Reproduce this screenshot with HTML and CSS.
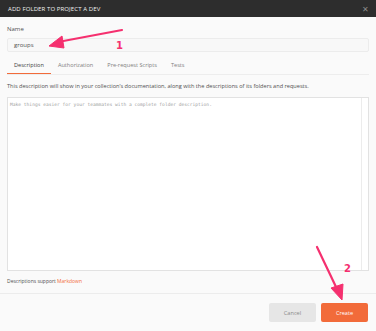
FILE: index.html
```html
<!DOCTYPE html>
<html lang="en">
<head>
    <meta charset="UTF-8">
    <title>Add Folder</title>
    <link rel="stylesheet" href="styles.css">
</head>
<body>

<div class="modal">
    <header class="modal-header">
        <h1>ADD FOLDER TO PROJECT A DEV</h1>
        <span class="close">&#x2715;</span>
    </header>

    <div class="modal-body">
        <label class="field-label">Name</label>
        <div class="name-input">groups</div>

        <nav class="tabs">
            <a class="tab active">Description</a>
            <a class="tab">Authorization</a>
            <a class="tab">Pre-request Scripts</a>
            <a class="tab">Tests</a>
        </nav>

        <p class="help">This description will show in your collection’s documentation, along with the descriptions of its folders and requests.</p>

        <div class="editor">
            <div class="editor-text">Make things easier for your teammates with a complete folder description.</div>
            <div class="editor-scroll"></div>
        </div>

        <p class="note">Descriptions support <a>Markdown</a></p>
    </div>

    <footer class="modal-footer">
        <button class="btn btn-cancel">Cancel</button>
        <button class="btn btn-create">Create</button>
    </footer>
</div>

<!-- annotation arrows drawn over the screenshot -->
<svg class="annotations" width="376" height="331" viewBox="0 0 376 331">
    <g fill="#f5306f" stroke="#f5306f">
        <line x1="122" y1="30" x2="58" y2="42" stroke-width="2.2" stroke-linecap="round"/>
        <polygon points="49,46 62,36 64,48" stroke-width="1" stroke-linejoin="round"/>
        <line x1="317" y1="247" x2="337" y2="289" stroke-width="2.2" stroke-linecap="round"/>
        <polygon points="342,300 331,288 343,284" stroke-width="1" stroke-linejoin="round"/>
    </g>
    <text x="116" y="49" class="num">1</text>
    <text x="344" y="272" class="num">2</text>
</svg>

</body>
</html>
```

FILE: styles.css
```css
body {
    margin: 0;
    font-family: 'Open Sans', sans-serif;
    background-color: #fafafa;
    color: #505050;
    width: 376px;
    height: 331px;
    overflow: hidden;
    position: relative;
}

.modal {
    display: flex;
    flex-direction: column;
    height: 331px;
}

.modal-header {
    background-color: #2d2d2d;
    height: 17px;
    flex: none;
    padding: 0 7px 0 8px;
    display: flex;
    justify-content: space-between;
    align-items: center;
}

.modal-header h1 {
    margin: 0;
    font-size: 6px;
    font-weight: 400;
    color: #f0f0f0;
    letter-spacing: 0.1px;
}

.close {
    color: #8a8a8a;
    font-size: 8px;
}

.modal-body {
    padding: 8px 7px 0 7px;
    display: flex;
    flex-direction: column;
}

.field-label {
    font-size: 6px;
    color: #505050;
    height: 8px;
    line-height: 8px;
}

.name-input {
    margin-top: 5px;
    height: 12px;
    border: 1px solid #ececec;
    border-radius: 2px;
    background-color: #f8f8f8;
    font-size: 6px;
    line-height: 12px;
    padding-left: 6px;
    color: #505050;
}

.tabs {
    display: flex;
    margin-top: 6px;
    height: 16px;
    border-bottom: 1px solid #ededed;
    align-items: stretch;
}

.tab {
    font-size: 5.6px;
    color: #808080;
    padding: 0 7px;
    line-height: 15px;
}

.tab.active {
    color: #404040;
    border-bottom: 1.5px solid #f26b3a;
}

.help {
    margin: 7px 0 0 0;
    font-size: 5.6px;
    line-height: 8px;
    color: #505050;
}

.editor {
    margin-top: 7px;
    height: 172px;
    border: 1px solid #e2e2e2;
    background-color: #ffffff;
    display: flex;
}

.editor-text {
    flex: 1;
    font-family: 'DejaVu Sans Mono', monospace;
    font-size: 4.6px;
    color: #a0a0a0;
    padding: 4px 2px;
}

.editor-scroll {
    width: 6px;
    border-left: 1px solid #ececec;
}

.note {
    margin: 6px 0 0 0;
    font-size: 5px;
    line-height: 8px;
    color: #505050;
}

.note a {
    color: #f26b3a;
}

.modal-footer {
    margin-top: 8px;
    border-top: 1px solid #ececec;
    flex: 1;
    display: flex;
    justify-content: flex-end;
    align-items: flex-start;
    padding: 9px 8px 0 0;
    gap: 5px;
}

.btn {
    border: none;
    border-radius: 2px;
    height: 19px;
    width: 47px;
    font-family: 'Open Sans', sans-serif;
    font-size: 5.6px;
    padding: 0;
}

.btn-cancel {
    background-color: #e6e6e6;
    color: #8a8a8a;
}

.btn-create {
    background-color: #f26b3a;
    color: #ffffff;
}

.annotations {
    position: absolute;
    left: 0;
    top: 0;
    pointer-events: none;
}

.num {
    font-family: 'DejaVu Sans', sans-serif;
    font-weight: 700;
    font-size: 10px;
    fill: #f5306f;
}
```
